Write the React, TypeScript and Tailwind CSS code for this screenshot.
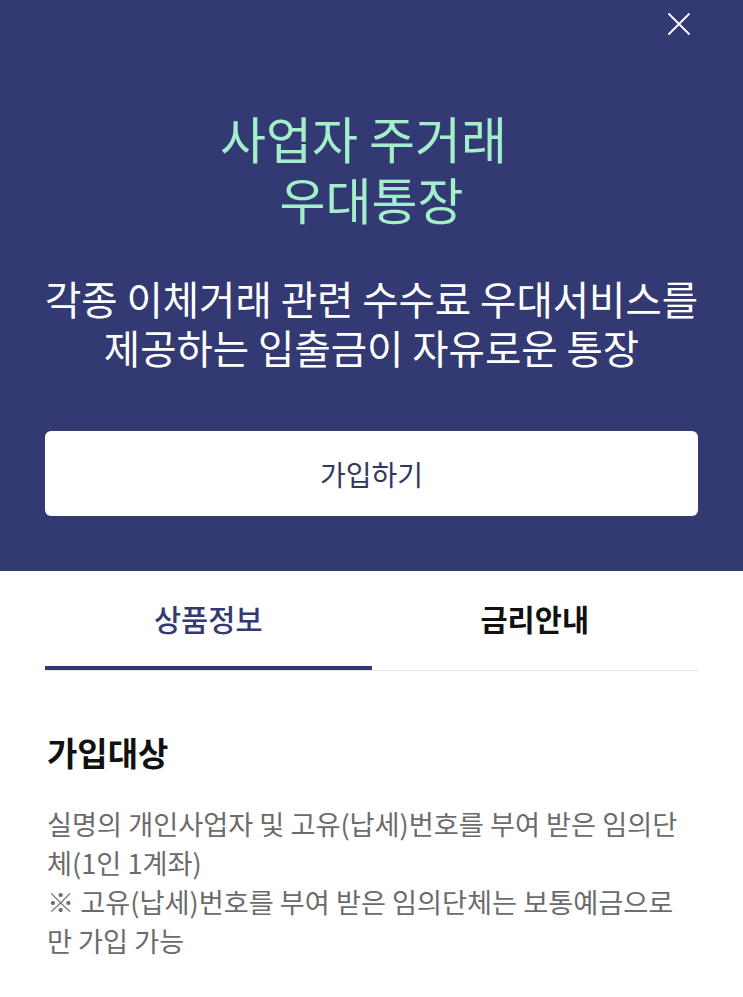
import { useState } from 'react';

const FONT = { fontFamily: '"Noto Sans CJK KR", "Noto Sans", sans-serif' };

const tabs = ['상품정보', '금리안내'];

function CloseIcon() {
  return (
    <svg viewBox="0 0 24 24" className="w-[24px] h-[24px]" fill="none" stroke="white" strokeWidth="1.8" strokeLinecap="round">
      <path d="M2 2 L22 22 M22 2 L2 22" />
    </svg>
  );
}

export default function App() {
  const [active, setActive] = useState(0);

  return (
    <div className="w-[743px] min-h-[997px] bg-white" style={FONT}>
      {/* Header */}
      <div className="relative bg-[#333a73] px-[45px] pt-[107px] pb-[55px]">
        <button className="absolute top-[12px] right-[52px]" aria-label="닫기">
          <CloseIcon />
        </button>
        <h1 className="text-center text-[50px] leading-[61px] text-[#a2efc9] font-normal">
          <span className="block pr-[16px]">사업자 주거래</span>
          <span className="block">우대통장</span>
        </h1>
        <p className="mt-[44px] text-center text-[39.5px] leading-[49px] text-white -mx-[20px]">
          각종 이체거래 관련 수수료 우대서비스를
          <br />
          제공하는 입출금이 자유로운 통장
        </p>
        <button className="mt-[60px] w-full h-[85px] bg-white rounded-[6px] text-[28px] text-[#33375e]">
          가입하기
        </button>
      </div>

      {/* Tabs */}
      <div className="px-[45px]">
        <div className="flex border-b border-[#e6e6e6]">
          {tabs.map((t, i) => (
            <button key={t} onClick={() => setActive(i)} className="flex-1 flex flex-col">
              <span
                className={`h-[95px] flex items-center justify-center text-[29.5px] ${
                  i === active ? 'text-[#333a73] font-medium' : 'text-[#111111] font-bold'
                }`}
              >
                {t}
              </span>
              <span className={`h-[4px] w-full ${i === active ? 'bg-[#333a73]' : 'bg-transparent'}`} />
            </button>
          ))}
        </div>

        {/* Content */}
        <div className="pt-[61px] pb-[40px] px-[2px]">
          <h2 className="text-[33px] leading-[40px] font-bold text-[#111111]">가입대상</h2>
          <p className="mt-[32px] text-[27.2px] leading-[39px] text-[#6b6b6b]">
            실명의 개인사업자 및 고유(납세)번호를 부여 받은 임의단체(1인 1계좌)
            <br />
            ※ 고유(납세)번호를 부여 받은 임의단체는 보통예금으로만 가입 가능
          </p>
        </div>
      </div>
    </div>
  );
}
